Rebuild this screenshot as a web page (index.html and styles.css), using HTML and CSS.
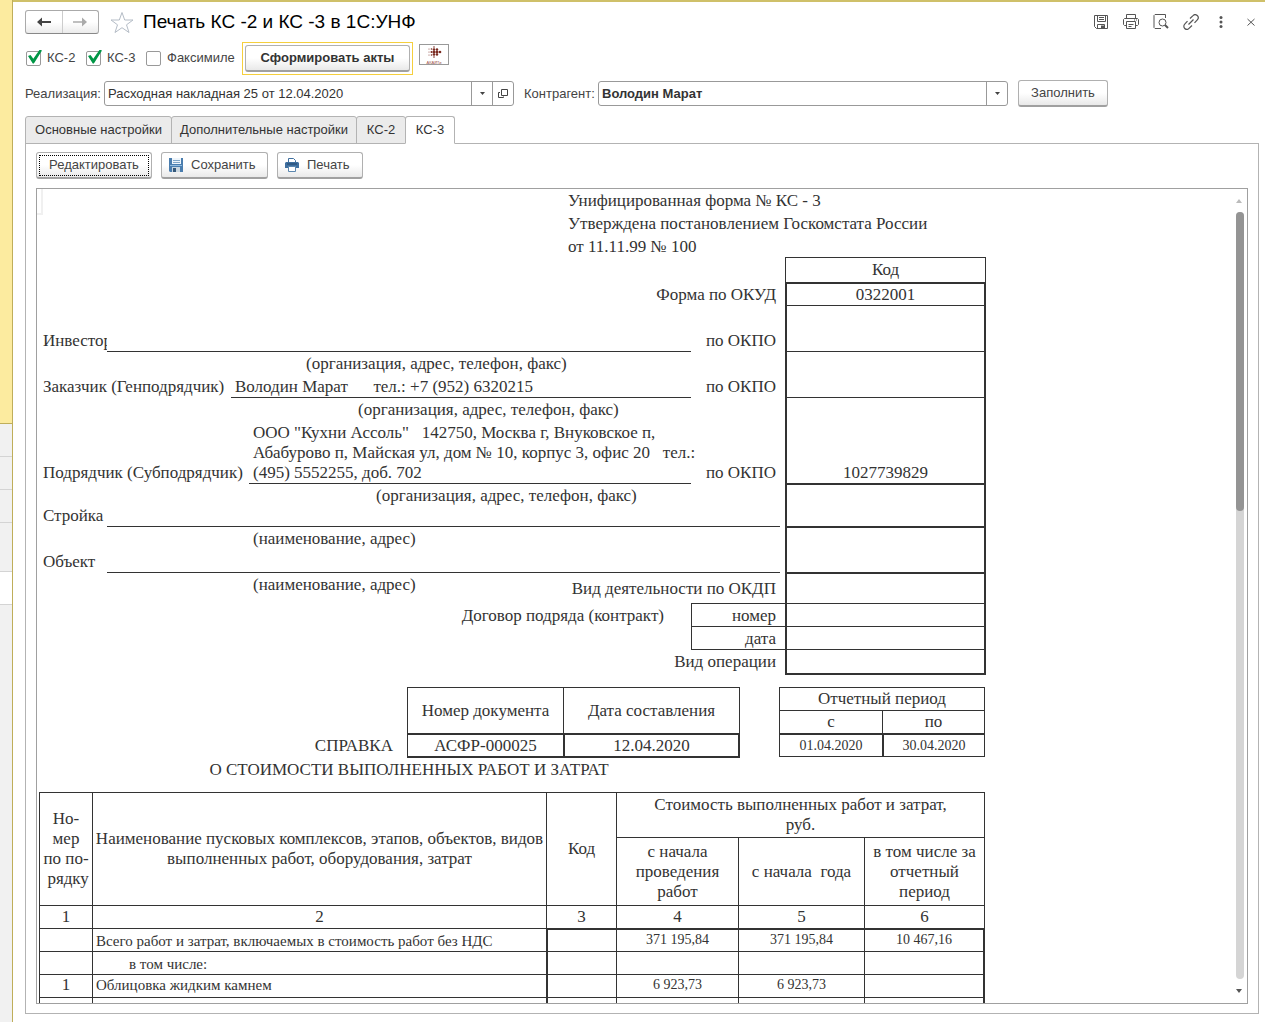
FILE: index.html
```html
<!DOCTYPE html>
<html lang="ru">
<head>
<meta charset="utf-8">
<title>Печать КС -2 и КС -3 в 1С:УНФ</title>
<link rel="stylesheet" href="styles.css">
</head>
<body>
<div class="app">
  <aside class="rail">
    <span class="rail-home"></span>
    <span class="rail-item"></span>
    <span class="rail-item"></span>
    <span class="rail-item"></span>
    <span class="rail-item rail-item-tall"></span>
    <span class="rail-item rail-item-open"></span>
  </aside>
  <main class="window">
    <header class="titlebar">
      <div class="history">
        <button type="button" class="history-btn" aria-label="Назад"><svg width="14" height="10" viewBox="0 0 14 10"><path d="M0 5 5 0.500V4h9v2H5v3.500z" fill="#444"/></svg></button>
        <button type="button" class="history-btn" aria-label="Вперед"><svg width="14" height="10" viewBox="0 0 14 10"><path d="M14 5 9 0.500V4.200H0v1.600h9v3.700z" fill="#aaa"/></svg></button>
      </div>
      <svg class="star" width="24" height="23" viewBox="0 0 24 23"><path d="M12 1.500 14.700 9H23l-6.500 4.800L19 21.500l-7-4.800-7 4.800 2.500-7.700L1 9h8.300z" fill="#fff" stroke="#b4bcc6"/></svg>
      <h1 class="title">Печать КС -2 и КС -3 в 1С:УНФ</h1>
      <div class="tools">
        <button type="button" class="tool" aria-label="Сохранить"><svg width="16" height="16" viewBox="0 0 16 16" fill="none" stroke="#555"><path d="M1.500 1.500h13v13h-11l-2-2zM4.500 1.500v6h8v-6M6 3.500h5M6 5.500h5M4.500 14.500v-4h7v4"/><path d="M8 11.500h3v3H8z" fill="#555" stroke="none"/></svg></button>
        <button type="button" class="tool" aria-label="Печать"><svg width="16" height="16" viewBox="0 0 16 16" fill="none" stroke="#555"><path d="M3.500 4.500v-4h9v4M3.500 11.500h-2l-1-1v-5l1-1h13l1 1v5l-1 1h-2M3.500 7.500h9v7h-9zM5.500 10.500h5M5.500 12.500h3M11 6h1M13 6h1"/></svg></button>
        <button type="button" class="tool" aria-label="Просмотр"><svg width="16" height="16" viewBox="0 0 16 16" fill="none" stroke="#555"><path d="M8 14.500H2l-1-1v-12l1-1h10.500V4"/><circle cx="9.500" cy="8.500" r="3.500"/><path d="m12 11 3 3" stroke-width="2"/></svg></button>
        <button type="button" class="tool" aria-label="Ссылка"><svg width="16" height="16" viewBox="0 0 16 16" fill="none" stroke="#555" stroke-width="1.200"><path d="M7 4.500 10 1.600a2.800 2.800 0 0 1 4.300 4.200L11.500 8.800M9 11.500 6 14.400a2.800 2.800 0 0 1-4.300-4.200L4.500 7.200M5.500 10.500l5-5"/></svg></button>
        <button type="button" class="tool" aria-label="Еще"><svg width="16" height="16" viewBox="0 0 16 16" fill="#555"><circle cx="8" cy="3.500" r="1.500"/><circle cx="8" cy="8" r="1.500"/><circle cx="8" cy="12.500" r="1.500"/></svg></button>
        <button type="button" class="tool" aria-label="Закрыть"><svg width="16" height="16" viewBox="0 0 16 16" stroke="#555"><path d="m4.500 5 7 6.500M11.500 5l-7 6.500"/></svg></button>
      </div>
    </header>

    <div class="options">
      <label class="check"><input type="checkbox" checked>КС-2</label>
      <label class="check"><input type="checkbox" checked>КС-3</label>
      <label class="check"><input type="checkbox">Факсимиле</label>
      <div class="default-frame"><button type="button" class="btn btn-main">Сформировать акты</button></div>
      <button type="button" class="logo" aria-label="О разработчике"><svg width="28" height="18" viewBox="0 0 28 18"><g fill="#7a2a20"><circle cx="9" cy="3" r=".5"/><circle cx="9" cy="6" r=".5"/><circle cx="9" cy="9" r=".5"/><circle cx="11.500" cy="3" r=".8"/><circle cx="11.500" cy="6" r="1"/><circle cx="11.500" cy="9" r=".8"/><circle cx="14" cy="1" r=".8"/><circle cx="14" cy="3.500" r="1.300"/><circle cx="14" cy="6" r="1.500"/><circle cx="14" cy="8.500" r="1.300"/><circle cx="14" cy="11" r=".8"/><circle cx="17" cy="3.500" r="1.200"/><circle cx="17" cy="6" r="1.500"/><circle cx="17" cy="8.500" r="1.200"/><circle cx="20" cy="6" r="1.300"/></g><text x="14" y="18" font-size="4" text-anchor="middle" fill="#a0524a" font-family="Liberation Sans, sans-serif">АКАЙТи</text></svg></button>
    </div>

    <div class="source">
      <label for="sale">Реализация:</label>
      <div class="combo">
        <input id="sale" type="text" value="Расходная накладная 25 от 12.04.2020">
        <button type="button" class="combo-btn" aria-label="Выбрать"><svg width="5" height="3"><path d="M0 0h5L2.500 3z" fill="#444"/></svg></button>
        <button type="button" class="combo-btn" aria-label="Открыть"><svg width="10" height="10" viewBox="0 0 10 10" fill="none" stroke="#444"><path d="M3.500.5h6v6h-6zM2 3.500H.5v5h5V7.500"/></svg></button>
      </div>
      <label for="partner" class="partner-label">Контрагент:</label>
      <div class="combo">
        <input id="partner" class="strong" type="text" value="Володин Марат">
        <button type="button" class="combo-btn" aria-label="Выбрать"><svg width="5" height="3"><path d="M0 0h5L2.500 3z" fill="#444"/></svg></button>
      </div>
      <button type="button" class="btn btn-fill">Заполнить</button>
    </div>

    <nav class="tabs">
      <button type="button" class="tab tab-main">Основные настройки</button>
      <button type="button" class="tab tab-extra">Дополнительные настройки</button>
      <button type="button" class="tab">КС-2</button>
      <button type="button" class="tab tab-active">КС-3</button>
    </nav>
    <section class="panel">
      <div class="toolbar">
        <button type="button" class="btn btn-edit">Редактировать</button>
        <button type="button" class="btn btn-icon btn-save"><svg width="14" height="14" viewBox="0 0 14 14"><path d="M0 0h14v14H1l-1-1z" fill="#4a7dae"/><path d="M3 0h9v6H3z" fill="#eef5fb"/><path d="M4 2h7v1H4zM4 4h7v1H4z" fill="#7fa6c8"/><path d="M1 7h12v1H1z" fill="#8fbbe0"/><path d="M3 9h8v5H3z" fill="#c9d6e0"/><path d="M4 10h3v4H4z" fill="#35587a"/></svg>Сохранить</button>
        <button type="button" class="btn btn-icon btn-print"><svg width="14" height="14" viewBox="0 0 14 14"><path d="M3.500 4V.5h5l2 2V4" fill="#fff" stroke="#3f6f9f"/><path d="M1 4h12l1 1v5H0V5z" fill="#3f6f9f"/><path d="M2 5.500h10v1H2z" fill="#23466a"/><path d="M3.500 8.500h7v5h-7z" fill="#fff" stroke="#5b86ae"/></svg>Печать</button>
      </div>

      <div class="viewer">
        <div class="sheet">
          <span class="cursor"></span>
          <div class="decree">
            <p>Унифицированная форма № КС - 3</p>
            <p>Утверждена постановлением Госкомстата России</p>
            <p>от 11.11.99 № 100</p>
          </div>

          <div class="form">
            <div class="fields">
              <div class="line line-head"></div>
              <div class="line line-right">Форма по ОКУД</div>
              <div class="line"></div>
              <div class="line"><span class="name name-short">Инвестор</span><span class="value"></span><span class="code-name">по ОКПО</span></div>
              <div class="line hint hint-investor">(организация, адрес, телефон, факс)</div>
              <div class="line"><span class="name name-customer">Заказчик (Генподрядчик)</span><span class="value">Володин Марат &nbsp; &nbsp; &nbsp;тел.: +7 (952) 6320215</span><span class="code-name">по ОКПО</span></div>
              <div class="line hint hint-customer">(организация, адрес, телефон, факс)</div>
              <div class="line line-tall"><span class="name name-contractor">Подрядчик (Субподрядчик)</span><span class="value">ООО "Кухни Ассоль" &nbsp; 142750, Москва г, Внуковское п,<br>Абабурово п, Майская ул, дом № 10, корпус 3, офис 20 &nbsp; тел.:<br>(495) 5552255, доб. 702</span><span class="code-name">по ОКПО</span></div>
              <div class="line line-low hint hint-contractor">(организация, адрес, телефон, факс)</div>
              <div class="line"><span class="name name-short">Стройка</span><span class="value value-wide"></span></div>
              <div class="line hint hint-place">(наименование, адрес)</div>
              <div class="line"><span class="name name-short">Объект</span><span class="value value-wide"></span></div>
              <div class="line line-kind hint hint-place"><span>(наименование, адрес)</span><span class="kind">Вид деятельности по ОКДП</span></div>
              <div class="contract">
                <span class="contract-name">Договор подряда (контракт)</span>
                <div class="contract-box"><span>номер</span><span>дата</span></div>
              </div>
              <div class="line line-right">Вид операции</div>
            </div>
            <table class="codes">
              <thead><tr class="r25"><th>Код</th></tr></thead>
              <tbody>
                <tr class="r23"><td class="top-thick">0322001</td></tr>
                <tr class="r46"><td></td></tr>
                <tr class="r46"><td></td></tr>
                <tr class="r86"><td>1027739829</td></tr>
                <tr class="r43"><td class="top-thick"></td></tr>
                <tr class="r46"><td class="top-thick"></td></tr>
                <tr class="r31"><td class="top-thick"></td></tr>
                <tr class="r23"><td></td></tr>
                <tr class="r23"><td></td></tr>
                <tr class="r26"><td class="bottom-thick"></td></tr>
              </tbody>
            </table>
          </div>

          <div class="act">
            <span class="act-word">СПРАВКА</span>
            <table class="number">
              <thead><tr class="r46"><th class="w156">Номер документа</th><th>Дата составления</th></tr></thead>
              <tbody><tr class="r25"><td>АСФР-000025</td><td>12.04.2020</td></tr></tbody>
            </table>
            <table class="period">
              <thead><tr class="r23"><th colspan="2">Отчетный период</th></tr><tr class="r23"><th class="w102">с</th><th>по</th></tr></thead>
              <tbody><tr class="r24"><td>01.04.2020</td><td>30.04.2020</td></tr></tbody>
            </table>
          </div>
          <p class="act-title">О СТОИМОСТИ ВЫПОЛНЕННЫХ РАБОТ И ЗАТРАТ</p>

          <table class="works">
            <colgroup><col class="w53"><col class="w454"><col class="w70"><col class="w122"><col class="w126"><col class="w121"></colgroup>
            <thead>
              <tr class="r45"><th rowspan="2">Но-<br>мер<br>по по-<br>&nbsp;рядку</th><th rowspan="2">Наименование пусковых комплексов, этапов, объектов, видов<br>выполненных работ, оборудования, затрат</th><th rowspan="2">Код</th><th colspan="3">Стоимость выполненных работ и затрат,<br>руб.</th></tr>
              <tr class="r68"><th>с начала<br>проведения<br>работ</th><th>с начала &nbsp;года</th><th>в том числе за<br>отчетный<br>период</th></tr>
              <tr class="r23"><th>1</th><th>2</th><th>3</th><th>4</th><th>5</th><th>6</th></tr>
            </thead>
            <tbody>
              <tr class="r23 total"><td></td><td class="text text-low">Всего работ и затрат, включаемых в стоимость работ без НДС</td><td class="mark"></td><td>371 195,84</td><td>371 195,84</td><td>10 467,16</td></tr>
              <tr class="r23"><td></td><td class="text text-low text-inner">в том числе:</td><td class="mark"></td><td></td><td></td><td></td></tr>
              <tr class="r23"><td class="index">1</td><td class="text">Облицовка жидким камнем</td><td class="mark"></td><td>6 923,73</td><td>6 923,73</td><td></td></tr>
              <tr class="r23"><td></td><td class="text"></td><td class="mark"></td><td></td><td></td><td></td></tr>
            </tbody>
          </table>
        </div>
        <div class="scroll">
          <svg width="7" height="5"><path d="M0 4h6L3 0z" fill="#bbb"/></svg>
          <div class="scroll-track"><div class="scroll-thumb"></div></div>
          <svg width="7" height="5"><path d="M0 0h6L3 4z" fill="#555"/></svg>
        </div>
      </div>
    </section>
  </main>
</div>
</body>
</html>
```
FILE: styles.css
```css
* { box-sizing: border-box; }
body {
  margin: 0;
  background: #fff;
  color: #444;
  font: 13px/16px "Liberation Sans", Arial, sans-serif;
}
p, h1 { margin: 0; }
button, input { font: inherit; color: inherit; padding: 0; margin: 0; }
svg { display: block; flex: none; }

.app { display: flex; height: 100vh; overflow: hidden; }

/* left section rail */
.rail {
  flex: none;
  width: 13px;
  display: flex;
  flex-direction: column;
  background: #f1f1f1;
  border-right: 1px solid #bfae5a;
}
.rail-home { height: 424px; background: #fceb9f; border-bottom: 1px solid #bfae5a; }
.rail-item { height: 33px; border-bottom: 1px solid #d4d4d4; }
.rail-item-tall { height: 49px; }
.rail-item-open { background: #fff; }

.window {
  flex: 1;
  min-width: 0;
  display: flex;
  flex-direction: column;
  padding: 8px 6px 8px 12px;
  border-top: 2px solid #cfc069;
}

/* title bar */
.titlebar { display: flex; align-items: center; height: 24px; }
.history {
  display: flex;
  width: 74px;
  height: 24px;
  border: 1px solid #aaa;
  border-bottom-color: #888;
  border-radius: 3px;
  background: linear-gradient(#fff 50%, #ebebeb);
}
.history-btn { flex: 1; display: flex; align-items: center; justify-content: center; border: 0; background: none; }
.history-btn + .history-btn { border-left: 1px solid #ccc; }
.star { margin: 0 9px 0 11px; }
.title { color: #000; font-size: 19px; line-height: 24px; font-weight: 400; }
.tools { display: flex; gap: 14px; margin-left: auto; }
.tool { width: 16px; height: 16px; border: 0; background: none; }

.btn {
  display: flex;
  align-items: center;
  justify-content: center;
  height: 27px;
  border: 1px solid #b0b0b0;
  border-bottom: 2px solid #a0a0a0;
  border-radius: 3px;
  background: linear-gradient(#fff 50%, #e9e9e9);
}

/* option row */
.options { display: flex; align-items: center; height: 32px; margin-top: 8px; }
.check { display: flex; align-items: center; gap: 6px; width: 60px; }
.check:nth-of-type(3) { width: 96px; }
.check input {
  appearance: none;
  position: relative;
  width: 15px;
  height: 15px;
  margin-left: 1px;
  border: 1px solid #999;
  border-radius: 2px;
  background: #fff;
}
.check input:checked::after {
  content: "";
  position: absolute;
  inset: -2px -2px 1px 1px;
  background: #009646;
  clip-path: polygon(0 46%, 18% 40%, 38% 66%, 84% 0, 100% 8%, 42% 100%, 34% 100%);
}
.default-frame { margin-left: 1px; padding: 2px; border: 1px solid #f5cf3d; }
.btn-main { width: 165px; height: 27px; color: #333; font-weight: 700; }
.logo { width: 30px; height: 21px; margin: 0 0 7px 6px; border: 1px solid #999; background: #fff; }

/* source row */
.source { display: flex; align-items: center; height: 27px; margin-top: 6px; }
.source label { width: 79px; }
.source .partner-label { width: 74px; margin-left: 10px; }
.combo {
  display: flex;
  flex: 0 1 410px;
  min-width: 0;
  height: 25px;
  border: 1px solid #999;
  border-radius: 3px;
  background: #fff;
}
.combo input { flex: 1; min-width: 0; padding-left: 3px; border: 0; border-radius: 3px; background: none; color: #333; }
.combo .strong { font-weight: 700; }
.combo-btn { display: flex; align-items: center; justify-content: center; width: 21px; border: 0; border-left: 1px solid #999; background: none; }
.btn-fill { width: 90px; margin-left: 10px; }

/* tabs */
.tabs { display: flex; flex: none; height: 28px; margin-top: 9px; }
.tab {
  width: 50px;
  height: 28px;
  margin-right: -1px;
  border: 1px solid #b3b3b3;
  border-radius: 3px 3px 0 0;
  background: #ebebeb;
  color: #333;
}
.tab-main { width: 147px; }
.tab-extra { width: 186px; }
.tab-active { position: relative; background: #fff; border-bottom-color: #fff; }
.panel {
  flex: 1;
  min-height: 0;
  display: flex;
  flex-direction: column;
  margin-top: -1px;
  padding: 8px 10px 9px;
  border: 1px solid #b3b3b3;
}
.toolbar { display: flex; flex: none; gap: 9px; }
.btn-edit { width: 116px; outline: 1px dotted #000; outline-offset: -4px; }
.btn-icon { justify-content: flex-start; gap: 8px; padding-left: 7px; }
.btn-save { width: 107px; }
.btn-print { width: 86px; }

/* document viewer */
.viewer {
  flex: 1;
  min-height: 0;
  display: flex;
  margin-top: 9px;
  border: 1px solid #a0a0a0;
  overflow: hidden;
}
.sheet {
  position: relative;
  flex: 1;
  min-width: 0;
  padding-left: 2px;
  overflow: hidden;
  color: #333;
  font: 17px/20px "Liberation Serif", "Times New Roman", serif;
}
.cursor { position: absolute; left: 0; top: 0; width: 6px; height: 26px; border: solid #f0f0f0; border-width: 0 2px 2px 0; }
.decree { padding-left: 529px; }
.decree p { line-height: 23px; }

.form { display: flex; width: 947px; margin-top: -1px; }
.fields { flex: 1; min-width: 0; padding-top: 1px; }
.line { display: flex; height: 23px; line-height: 23px; white-space: nowrap; }
.line-head { height: 25px; }
.line-right { justify-content: flex-end; padding-right: 9px; }
.line-tall { height: 63px; align-items: flex-end; }
.line-low { height: 20px; }
.line-kind { height: 30px; justify-content: space-between; }
.name { flex: none; padding-left: 4px; overflow: hidden; }
.name-short { width: 68px; }
.name-customer { width: 192px; }
.name-contractor { width: 210px; }
.value { flex: 1; min-width: 0; align-self: stretch; padding-left: 4px; border-bottom: 1px solid #333; }
.line-tall .value { padding-top: 2px; line-height: 20px; }
.value-wide { margin-right: 5px; }
.code-name { flex: none; width: 94px; padding-right: 9px; text-align: right; }
.hint-investor { padding-left: 267px; }
.hint-customer { padding-left: 319px; }
.hint-contractor { padding-left: 337px; }
.hint-place { padding-left: 214px; }
.kind { padding-right: 9px; line-height: 32px; }
.contract { display: flex; justify-content: flex-end; height: 47px; }
.contract-name { padding-right: 27px; line-height: 25px; }
.contract-box { display: flex; flex-direction: column; width: 94px; border: solid #333; border-width: 1px 0 1px 1px; }
.contract-box span { height: 22px; padding-right: 9px; line-height: 23px; text-align: right; }
.contract-box span + span { height: 23px; border-top: 1px solid #333; }

table { border-spacing: 0; table-layout: fixed; flex: none; }
th, td { padding: 0; border: 0 solid #333; border-top-width: 1px; border-left-width: 1px; font-weight: 400; text-align: center; }
tr > :last-child { border-right-width: 1px; }
.r23 { height: 23px; }
.r24 { height: 24px; }
.r25 { height: 25px; }
.r26 { height: 26px; }
.r31 { height: 31px; }
.r43 { height: 43px; }
.r45 { height: 45px; }
.r46 { height: 46px; }
.r68 { height: 68px; }
.r86 { height: 86px; }
.w53 { width: 53px; }
.w70 { width: 70px; }
.w102 { width: 102px; }
.w121 { width: 121px; }
.w122 { width: 122px; }
.w126 { width: 126px; }
.w156 { width: 156px; }
.w454 { width: 454px; }

.codes { width: 201px; }
.codes td { border-left-width: 2px; border-right-width: 2px; vertical-align: bottom; }
.codes .top-thick { border-top-width: 2px; }
.codes .bottom-thick { border-bottom-width: 2px; }

.act { display: flex; width: 947px; margin-top: 12px; align-items: flex-end; }
.act-word { width: 368px; padding-right: 14px; text-align: right; line-height: 24px; }
.number { width: 333px; }
.number td { border-top-width: 2px; border-bottom-width: 2px; }
.number td + td { border-left-width: 2px; border-right-width: 2px; }
.period { width: 206px; margin: 0 1px 1px auto; }
.period td { border-top-width: 2px; border-bottom-width: 1px; font-size: 14px; }
.period td + td { border-left-width: 2px; }
.act-title { width: 740px; line-height: 23px; text-align: center; }

.works { width: 946px; margin-top: 11px; }
.works td { font-size: 14px; line-height: 20px; vertical-align: top; }
.works .text { padding-left: 3px; font-size: 15px; text-align: left; }
.works .text-low { padding-top: 2px; }
.works .text-inner { padding-left: 36px; }
.works .index { font-size: 17px; }
.works .mark { border-left-width: 2px; }
.works td:last-child { border-right-width: 2px; }
.total td:nth-child(n+3) { border-top-width: 2px; }

/* scroll bar */
.scroll { flex: none; width: 15px; display: flex; flex-direction: column; align-items: center; padding: 10px 0 9px; }
.scroll-track { flex: 1; width: 8px; margin: 8px 0 10px; border-radius: 4px; background: #d5d5d5; }
.scroll-thumb { height: 39%; border-radius: 4px; background: #949494; }
```
